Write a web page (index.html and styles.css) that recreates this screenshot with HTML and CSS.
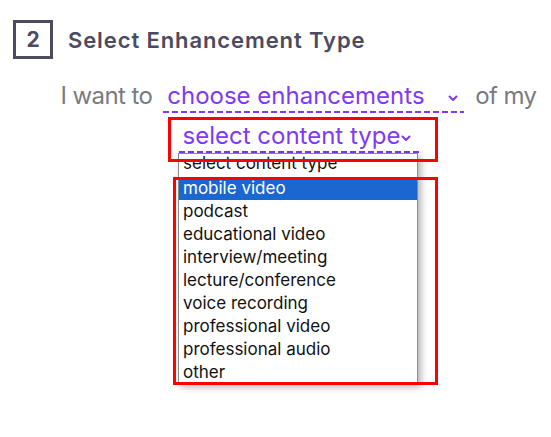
FILE: index.html
```html
<!DOCTYPE html>
<html>
<head>
<meta charset="utf-8">
<link rel="stylesheet" href="styles.css">
</head>
<body>
<div class="page">
  <div class="step">
    <div class="num">2</div>
    <div class="title">Select Enhancement Type</div>
  </div>
  <div class="sentence">
    <div class="row row1">
      <span class="plain">I want to</span>
      <span class="pick pick1"><span class="pick-text">choose enhancements</span><svg class="chev" width="10" height="7" viewBox="0 0 10 7"><path d="M1.5 1.5 L5 5 L8.5 1.5" fill="none" stroke="#8039f5" stroke-width="2" stroke-linecap="round" stroke-linejoin="round"/></svg></span>
      <span class="plain">of my</span>
    </div>
    <div class="row row2">
      <span class="pick pick2"><span class="pick-text">select content type</span><svg class="chev" width="10" height="7" viewBox="0 0 10 7"><path d="M1.5 1.5 L5 5 L8.5 1.5" fill="none" stroke="#8039f5" stroke-width="2" stroke-linecap="round" stroke-linejoin="round"/></svg></span>
    </div>
  </div>

  <div class="listbox">
    <div class="opt">select content type</div>
    <div class="opt sel">mobile video</div>
    <div class="opt">podcast</div>
    <div class="opt">educational video</div>
    <div class="opt">interview/meeting</div>
    <div class="opt">lecture/conference</div>
    <div class="opt">voice recording</div>
    <div class="opt">professional video</div>
    <div class="opt">professional audio</div>
    <div class="opt">other</div>
  </div>

  <div class="mark mark1"></div>
  <div class="mark mark2"></div>
</div>
</body>
</html>
```
FILE: styles.css
```css
html, body {
  margin: 0;
  padding: 0;
  background: #ffffff;
}

.page {
  position: relative;
  width: 551px;
  height: 437px;
  overflow: hidden;
  font-family: Inter, "Noto Sans", "Liberation Sans", sans-serif;
}

.step {
  display: flex;
  align-items: center;
  gap: 15px;
  padding: 20px 0 0 13px;
}

.num {
  box-sizing: border-box;
  width: 40px;
  height: 39px;
  border: 3px solid #4b4b61;
  display: flex;
  align-items: center;
  justify-content: center;
  font-size: 21px;
  font-weight: 700;
  color: #4b4b61;
}

.title {
  font-size: 22px;
  font-weight: 600;
  color: #4b4b61;
  letter-spacing: 0.9px;
}

.sentence {
  padding-left: 46px;
  margin-top: 21px;
}

.row {
  display: flex;
  justify-content: center;
  align-items: baseline;
}

.row1 {
  gap: 11px;
}

.row2 {
  margin-top: 7px;
}

.plain {
  font-size: 24px;
  color: #7a7a80;
  line-height: 32px;
  letter-spacing: -0.6px;
}

.pick {
  display: inline-flex;
  align-items: center;
  box-sizing: border-box;
  font-size: 24px;
  line-height: 32px;
  color: #8039f5;
  padding: 0 4px 1px 4px;
  background-image: repeating-linear-gradient(90deg, #8039f5 0 6px, transparent 6px 9px);
  background-size: 100% 2px;
  background-position: left bottom;
  background-repeat: no-repeat;
}

.pick1 {
  width: 301px;
  justify-content: space-between;
  padding-right: 6px;
}

.pick2 {
  width: 240px;
  justify-content: space-between;
  padding-right: 8px;
}

.chev {
  display: block;
  margin-top: 4px;
}

.listbox {
  position: absolute;
  left: 178px;
  top: 153px;
  width: 240px;
  height: 231px;
  box-sizing: border-box;
  border: 1px solid #8a8a8a;
  background: #ffffff;
  box-shadow: 3px 3px 7px rgba(0, 0, 0, 0.3);
  overflow: hidden;
}

.opt {
  height: 23px;
  line-height: 23px;
  padding-left: 4px;
  font-size: 17px;
  color: #111111;
  white-space: nowrap;
}

.opt:first-child {
  height: 23px;
  line-height: 19px;
}

.opt.sel {
  background: #1a67d2;
  color: #ffffff;
}

.mark {
  position: absolute;
  box-sizing: border-box;
  border: 3px solid #ff0000;
}

.mark1 {
  left: 168px;
  top: 117px;
  width: 270px;
  height: 45px;
}

.mark2 {
  left: 173px;
  top: 177px;
  width: 265px;
  height: 208px;
}
```
